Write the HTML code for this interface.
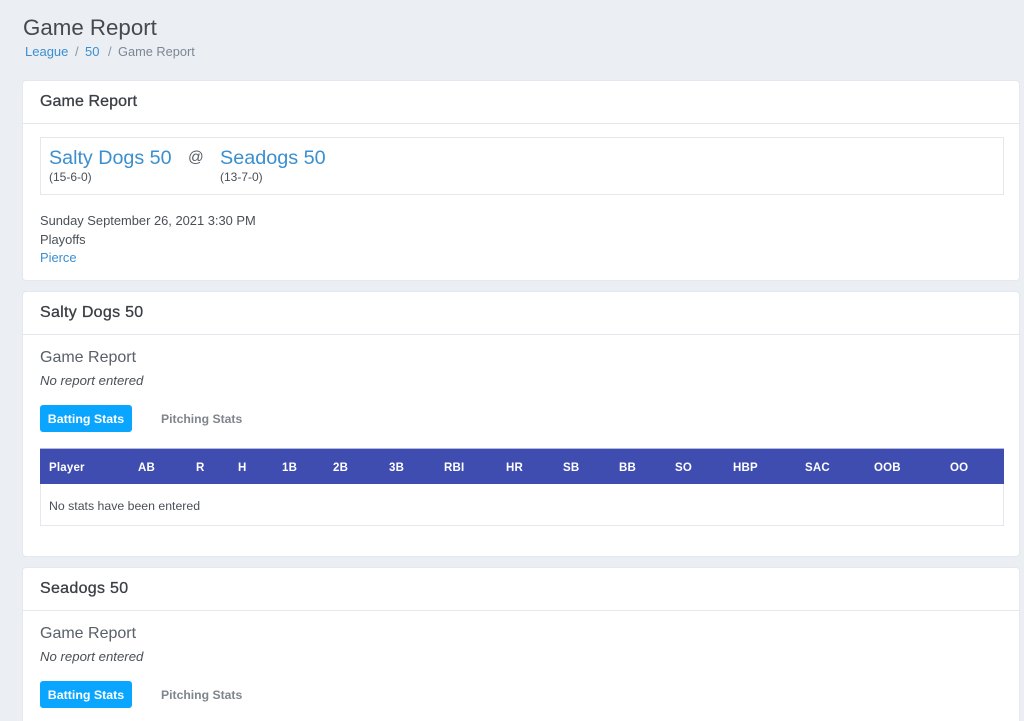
<!DOCTYPE html>
<html><head><meta charset="utf-8"><style>
html,body{margin:0;padding:0;width:1024px;height:721px;overflow:hidden;background:#ebeef3;font-family:"Liberation Sans",sans-serif;color:#495057}
#w{position:absolute;left:0;top:0;width:1024px;height:721px;overflow:hidden}
.t{position:absolute;white-space:nowrap;line-height:1}
.a{color:#3a8fd0}
.card{position:absolute;left:22px;width:998px;background:#fff;border:1px solid #e3e8ef;border-radius:4px;box-sizing:border-box}
.line{position:absolute;left:23px;width:996px;height:1px;background:#e3e8ef}
.h{font-size:16px;color:#3b3f45;-webkit-text-stroke:.3px #3b3f45;letter-spacing:.3px}
.th{position:absolute;top:462px;font-size:11.5px;font-weight:bold;color:#fff;line-height:12px;white-space:nowrap;letter-spacing:.2px}
.btn{position:absolute;left:40px;width:92px;height:27px;background:#0aa5ff;border-radius:3px;color:#fff;font-size:12.4px;font-weight:bold;text-align:center;line-height:28px}
</style></head><body><div id="w">
<div class="t" style="left:23px;top:17px;font-size:22.3px;color:#464a50">Game Report</div>
<div class="t a" style="left:25px;top:45px;font-size:13px">League</div>
<div class="t" style="left:75px;top:45px;font-size:13px;color:#8a94a0">/</div>
<div class="t a" style="left:85px;top:45px;font-size:13px">50</div>
<div class="t" style="left:108px;top:45px;font-size:13px;color:#8a94a0">/</div>
<div class="t" style="left:118px;top:46px;font-size:12.8px;color:#7b8794">Game Report</div>

<div class="card" style="top:80px;height:201px"></div>
<div class="line" style="top:123px"></div>
<div class="t h" style="left:40px;top:94px;letter-spacing:.1px">Game Report</div>
<div style="position:absolute;left:40px;top:137px;width:964px;height:58px;box-sizing:border-box;border:1px solid #e3e8ef"></div>
<div class="t a" style="left:49px;top:149px;font-size:19.7px">Salty Dogs 50</div>
<div class="t" style="left:188px;top:150px;font-size:15.5px;color:#5a6068">@</div>
<div class="t a" style="left:220px;top:149px;font-size:19.8px">Seadogs 50</div>
<div class="t" style="left:49px;top:171px;font-size:12px">(15-6-0)</div>
<div class="t" style="left:220px;top:171px;font-size:12px">(13-7-0)</div>
<div class="t" style="left:40px;top:215px;font-size:12.9px">Sunday September 26, 2021 3:30 PM</div>
<div class="t" style="left:40px;top:234px;font-size:12.9px">Playoffs</div>
<div class="t a" style="left:40px;top:252px;font-size:12.9px">Pierce</div>

<div class="card" style="top:291px;height:266px"></div>
<div class="line" style="top:334px"></div>
<div class="t h" style="left:40px;top:305px">Salty Dogs 50</div>
<div class="t" style="left:40px;top:350px;font-size:16px;color:#5a6068">Game Report</div>
<div class="t" style="left:40px;top:374px;font-size:13.2px;font-style:italic">No report entered</div>
<div class="btn" style="top:405px">Batting Stats</div>
<div class="t" style="left:161px;top:413px;font-size:12.2px;font-weight:bold;color:#7f858c">Pitching Stats</div>
<div style="position:absolute;left:40px;top:448px;width:964px;height:78px;box-sizing:border-box;border:1px solid #e3e8ef;border-top:0"></div>
<div style="position:absolute;left:40px;top:448px;width:964px;height:36px;background:#3f4db0;border-top:1px solid #b3bae0;box-sizing:border-box"></div>
<div class="th" style="left:49px">Player</div>
<div class="th" style="left:138px">AB</div>
<div class="th" style="left:196px">R</div>
<div class="th" style="left:238px">H</div>
<div class="th" style="left:282px">1B</div>
<div class="th" style="left:333px">2B</div>
<div class="th" style="left:389px">3B</div>
<div class="th" style="left:444px">RBI</div>
<div class="th" style="left:506px">HR</div>
<div class="th" style="left:563px">SB</div>
<div class="th" style="left:619px">BB</div>
<div class="th" style="left:675px">SO</div>
<div class="th" style="left:733px">HBP</div>
<div class="th" style="left:805px">SAC</div>
<div class="th" style="left:874px">OOB</div>
<div class="th" style="left:950px">OO</div>
<div class="t" style="left:49px;top:500px;font-size:12.3px">No stats have been entered</div>

<div class="card" style="top:567px;height:170px"></div>
<div class="line" style="top:610px"></div>
<div class="t h" style="left:40px;top:581px">Seadogs 50</div>
<div class="t" style="left:40px;top:626px;font-size:16px;color:#5a6068">Game Report</div>
<div class="t" style="left:40px;top:650px;font-size:13.2px;font-style:italic">No report entered</div>
<div class="btn" style="top:681px">Batting Stats</div>
<div class="t" style="left:161px;top:689px;font-size:12.2px;font-weight:bold;color:#7f858c">Pitching Stats</div>
</div></body></html>
